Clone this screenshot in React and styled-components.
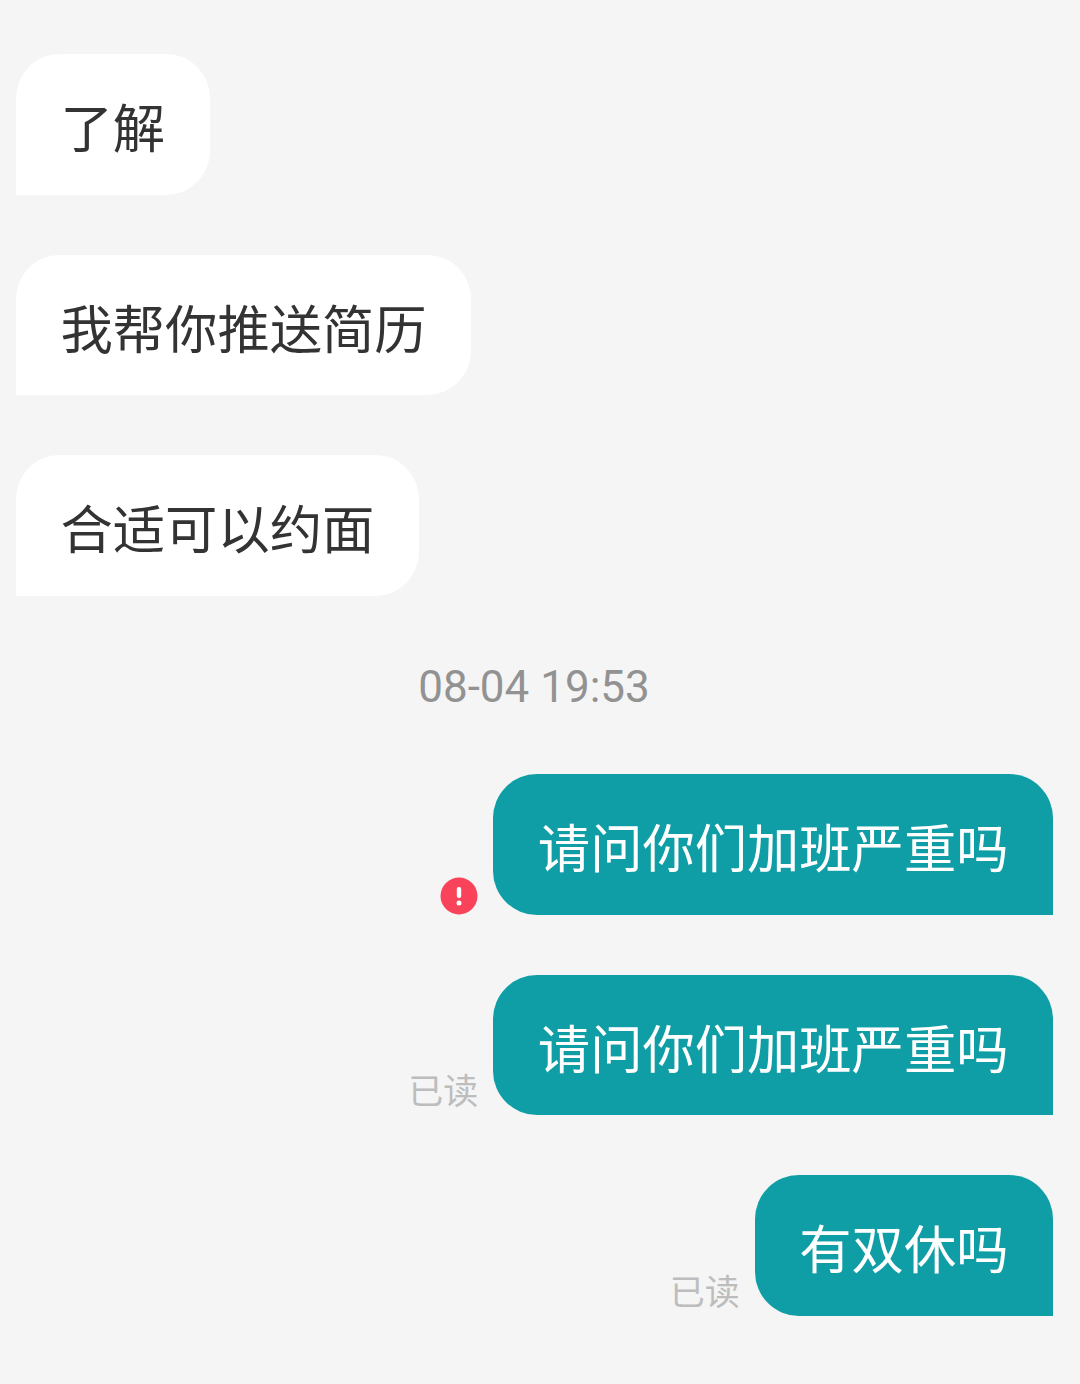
import styled, { createGlobalStyle } from 'styled-components';

const GlobalStyle = createGlobalStyle`
	html, body {
		margin: 0;
		padding: 0;
		background-color: #f5f5f5;
	}
`;

const App = () => {
	return (
		<Page>
			<GlobalStyle />
			<Row>
				<Incoming>了解</Incoming>
			</Row>
			<Row>
				<Incoming>我帮你推送简历</Incoming>
			</Row>
			<Row>
				<Incoming>合适可以约面</Incoming>
			</Row>
			<Time>08-04 19:53</Time>
			<Row $mine>
				<Failed>
					<svg width="38" height="38" viewBox="0 0 38 38">
						<circle cx="19" cy="19" r="18.5" fill="#f9435a" />
						<rect x="16.8" y="10" width="4.4" height="11" rx="2" fill="#fff" />
						<circle cx="19" cy="26" r="2.5" fill="#fff" />
					</svg>
				</Failed>
				<Outgoing>请问你们加班严重吗</Outgoing>
			</Row>
			<Row $mine>
				<ReadMark>已读</ReadMark>
				<Outgoing>请问你们加班严重吗</Outgoing>
			</Row>
			<Row $mine>
				<ReadMark>已读</ReadMark>
				<Outgoing>有双休吗</Outgoing>
			</Row>
		</Page>
	);
};

const Page = styled.div`
	display: flex;
	flex-direction: column;
	gap: 60px;
	box-sizing: border-box;
	width: 1080px;
	height: 1384px;
	padding: 54px 27px 0 16px;
	background-color: #f5f5f5;
	font-family: 'Roboto', 'Noto Sans CJK SC', sans-serif;
`;

const Row = styled.div`
	display: flex;
	align-items: flex-end;
	justify-content: ${(props) => (props.$mine ? 'flex-end' : 'flex-start')};
	gap: 15px;
`;

const Bubble = styled.div`
	box-sizing: border-box;
	height: 140.5px;
	padding: 12px 44.5px 0;
	display: flex;
	align-items: center;
	font-size: 52.3px;
	line-height: 1;
`;

const Incoming = styled(Bubble)`
	background-color: #ffffff;
	color: #333333;
	border-radius: 44px 44px 44px 0;
`;

const Outgoing = styled(Bubble)`
	background-color: #0f9ea5;
	color: #ffffff;
	border-radius: 44px 44px 0 44px;
`;

const Time = styled.div`
	box-sizing: border-box;
	height: 58.5px;
	padding: 4px 1px 0 0;
	display: flex;
	align-items: center;
	justify-content: center;
	font-size: 44px;
	line-height: 1;
	color: #929292;
`;

const Failed = styled.div`
	display: flex;
	width: 38px;
	height: 38px;
`;

const ReadMark = styled.span`
	font-size: 35px;
	line-height: 1;
	color: #bdbdbd;
	padding-bottom: 5px;
`;

export default App;
